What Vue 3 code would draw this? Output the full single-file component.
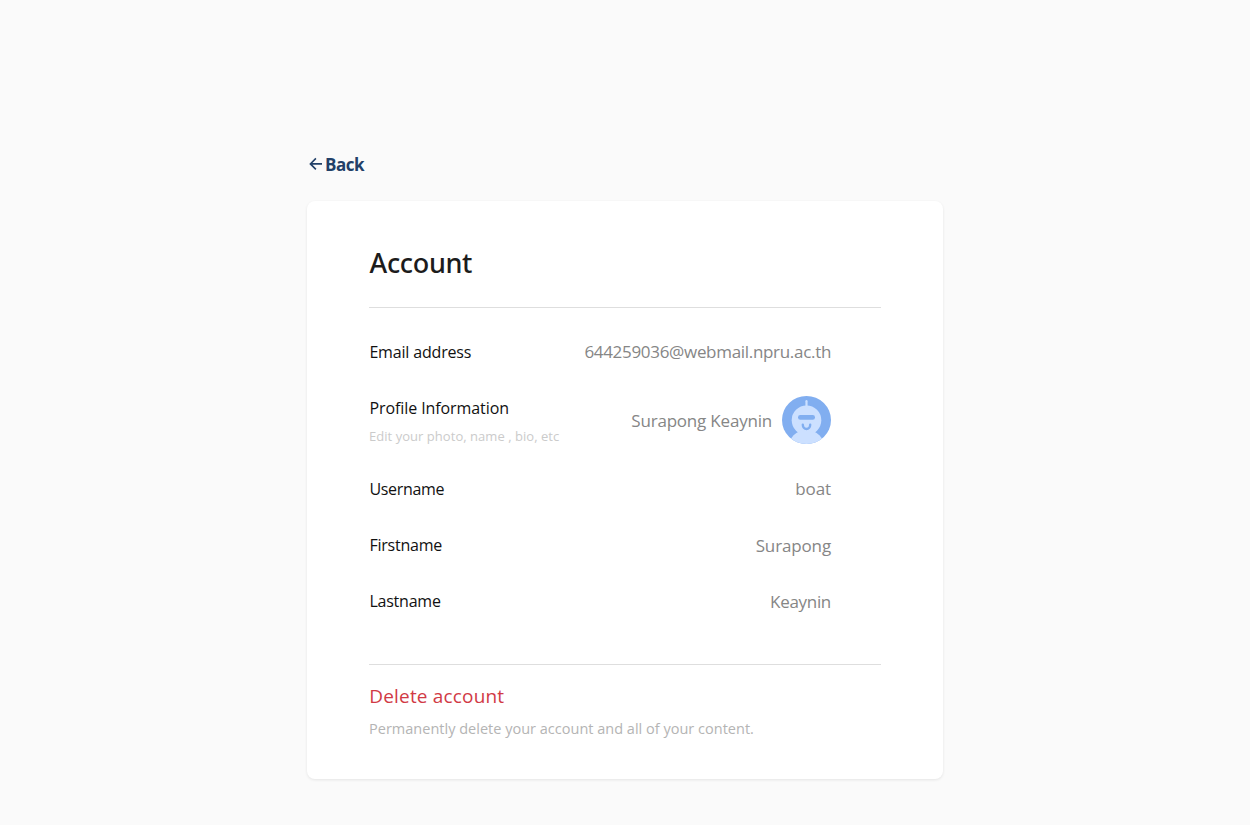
<script setup>
const email = '644259036@webmail.npru.ac.th'
const fullName = 'Surapong Keaynin'
const fields = [
  { key: 'username', label: 'Username', value: 'boat' },
  { key: 'firstname', label: 'Firstname', value: 'Surapong' },
  { key: 'lastname', label: 'Lastname', value: 'Keaynin' },
]
</script>

<template>
  <main class="page">
    <a class="back">
      <svg class="arrow" width="14" height="14" viewBox="0 0 14 14" fill="none" stroke="currentColor" stroke-width="1.6">
        <path d="M13 6.9H1.6M6.9 1.4 1.4 6.9 6.9 12.4" />
      </svg>
      <span class="back-text">Back</span>
    </a>

    <section class="card">
      <h1>Account</h1>

      <div class="rows">
        <div class="row email">
          <span class="label">Email address</span>
          <span class="value">{{ email }}</span>
        </div>

        <div class="row profile">
          <div class="text">
            <div class="label">Profile Information</div>
            <div class="hint">Edit your photo, name , bio, etc</div>
          </div>
          <div class="person">
            <span class="value">{{ fullName }}</span>
            <svg class="avatar" width="49" height="48" viewBox="0 0 49 48">
              <defs>
                <clipPath id="face"><ellipse cx="24.5" cy="24" rx="24.5" ry="24" /></clipPath>
              </defs>
              <g clip-path="url(#face)">
                <rect width="49" height="48" fill="#81aef0" />
                <circle cx="24.5" cy="52" r="18.2" fill="#cce0ff" />
                <circle cx="24.5" cy="24.2" r="14.8" fill="#cce0ff" />
                <path d="M24.5 5.2v7" stroke="#cce0ff" stroke-width="2.2" stroke-linecap="round" />
                <rect x="16" y="19" width="17" height="4.8" rx="2.3" fill="#81aef0" />
                <path d="M20.8 28.8a3.7 4.2 0 0 0 7.4 0" fill="none" stroke="#81aef0" stroke-width="2.4" stroke-linecap="round" />
              </g>
            </svg>
          </div>
        </div>

        <div v-for="f in fields" :key="f.key" class="row" :class="f.key">
          <span class="label">{{ f.label }}</span>
          <span class="value">{{ f.value }}</span>
        </div>
      </div>

      <div class="danger">
        <div class="delete">Delete account</div>
        <div class="note">Permanently delete your account and all of your content.</div>
      </div>
    </section>
  </main>
</template>

<style>
body { background: #fafafa; }
</style>

<style scoped>
.page {
  box-sizing: border-box;
  width: 636px;
  height: 825px;
  margin: 0 auto;
  padding-top: 152px;
  font-family: "Open Sans", "Noto Sans", sans-serif;
}
.back {
  display: flex;
  align-items: center;
  gap: 2px;
  height: 24px;
  padding-left: 2px;
  color: #224068;
  font-size: 17px;
  font-weight: 700;
  line-height: 24px;
  letter-spacing: -0.5px;
}
.back-text { padding-top: 2px; }
.arrow { flex: none; }
.card {
  box-sizing: border-box;
  height: 578px;
  margin-top: 25px;
  padding: 42px 62px 0;
  background: #fff;
  border-radius: 8px;
  box-shadow: 0 1px 3px rgba(0, 0, 0, 0.09);
}
h1 {
  margin: 0;
  height: 64px;
  padding-left: 0;
  border-bottom: 1px solid #dedede;
  font-family: "Noto Sans", sans-serif;
  font-size: 27px;
  font-weight: 500;
  line-height: 40px;
  letter-spacing: -0.35px;
  text-indent: 0.6px;
  color: #1c1c1c;
}
.rows {
  box-sizing: border-box;
  height: 357px;
  padding: 32px 50px 0 0;
  border-bottom: 1px solid #dedede;
}
.row {
  display: flex;
  justify-content: space-between;
  height: 24px;
  margin-bottom: 32px;
  line-height: 24px;
}
.label {
  font-size: 16px;
  letter-spacing: -0.22px;
  text-indent: 0.4px;
  color: #111;
}
.value {
  font-size: 17px;
  letter-spacing: -0.2px;
  color: #868686;
}
.email .label { letter-spacing: -0.17px; }
.email .value { letter-spacing: -0.31px; }
.username .label { letter-spacing: -0.3px; }
.username .value { letter-spacing: -0.1px; }
.firstname .value { letter-spacing: -0.14px; }
.lastname .value { letter-spacing: -0.3px; }
.person .value,
.firstname .value,
.lastname .value {
  padding-top: 1px;
}
.profile {
  height: 49px;
}
.profile .label { letter-spacing: -0.08px; }
.hint {
  margin-top: 5px;
  font-size: 13px;
  line-height: 22px;
  letter-spacing: 0.04px;
  color: #cbcbcb;
}
.person {
  display: flex;
  align-items: center;
  gap: 10px;
  height: 48px;
}
.person .value { padding-top: 2px; }
.avatar { display: block; }
.delete {
  margin-top: 17px;
  font-size: 19px;
  line-height: 28px;
  letter-spacing: 0.17px;
  text-indent: 0.3px;
  color: #d13a45;
}
.note {
  margin-top: 7px;
  font-size: 14.5px;
  line-height: 24px;
  letter-spacing: 0.01px;
  color: #b4b4b4;
}
</style>
